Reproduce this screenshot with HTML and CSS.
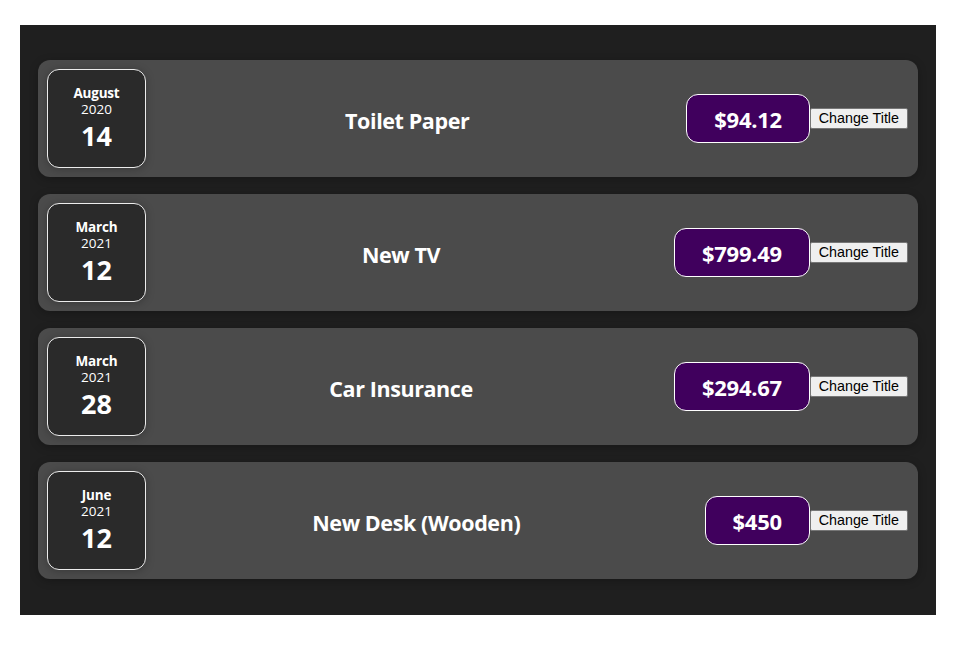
FILE: index.html
```html
<!DOCTYPE html>
<html lang="en">
<head>
<meta charset="utf-8">
<title>Expenses</title>
<link rel="stylesheet" href="styles.css">
</head>
<body>
<div class="expenses">
  <div class="expense-item">
    <div class="expense-date">
      <div class="expense-date__month">August</div>
      <div class="expense-date__year">2020</div>
      <div class="expense-date__day">14</div>
    </div>
    <h2 class="expense-item__title">Toilet Paper</h2>
    <div class="expense-item__price">$94.12</div>
    <button class="expense-item__btn">Change Title</button>
  </div>
  <div class="expense-item">
    <div class="expense-date">
      <div class="expense-date__month">March</div>
      <div class="expense-date__year">2021</div>
      <div class="expense-date__day">12</div>
    </div>
    <h2 class="expense-item__title">New TV</h2>
    <div class="expense-item__price">$799.49</div>
    <button class="expense-item__btn">Change Title</button>
  </div>
  <div class="expense-item">
    <div class="expense-date">
      <div class="expense-date__month">March</div>
      <div class="expense-date__year">2021</div>
      <div class="expense-date__day">28</div>
    </div>
    <h2 class="expense-item__title">Car Insurance</h2>
    <div class="expense-item__price">$294.67</div>
    <button class="expense-item__btn">Change Title</button>
  </div>
  <div class="expense-item">
    <div class="expense-date">
      <div class="expense-date__month">June</div>
      <div class="expense-date__year">2021</div>
      <div class="expense-date__day">12</div>
    </div>
    <h2 class="expense-item__title">New Desk (Wooden)</h2>
    <div class="expense-item__price">$450</div>
    <button class="expense-item__btn">Change Title</button>
  </div>
</div>
</body>
</html>
```
FILE: styles.css
```css
html, body {
  margin: 0;
  padding: 0;
  background: #ffffff;
}

body {
  font-family: "Open Sans", "Noto Sans", sans-serif;
}

.expenses {
  box-sizing: border-box;
  width: 916px;
  margin: 25px 0 0 20px;
  padding: 35px 18px 36px;
  background-color: #1f1f1f;
  display: flex;
  flex-direction: column;
  gap: 17px;
}

.expense-item {
  display: flex;
  align-items: center;
  height: 117px;
  box-sizing: border-box;
  padding: 9px 10px 9px 9px;
  border-radius: 12px;
  background-color: #4b4b4b;
  box-shadow: 0 2px 8px rgba(0, 0, 0, 0.25);
}

.expense-date {
  box-sizing: border-box;
  width: 99px;
  height: 99px;
  flex: none;
  display: flex;
  flex-direction: column;
  align-items: center;
  justify-content: center;
  padding-top: 2px;
  border: 1px solid #ececec;
  border-radius: 12px;
  background-color: #2a2a2a;
  color: #ffffff;
  box-shadow: 0 1px 8px rgba(0, 0, 0, 0.25);
}

.expense-date__month {
  font-size: 13.5px;
  line-height: 16.5px;
  font-weight: bold;
  letter-spacing: -0.2px;
}

.expense-date__year {
  font-size: 13.5px;
  line-height: 17px;
}

.expense-date__day {
  font-size: 27px;
  line-height: 36px;
  font-weight: bold;
}

.expense-item__title {
  flex: 1;
  margin: 0 18px 0 0;
  padding-top: 3px;
  text-align: center;
  color: #ffffff;
  font-size: 21.5px;
  letter-spacing: -0.4px;
  font-weight: bold;
}

.expense-item__price {
  font-size: 22px;
  line-height: 29px;
  letter-spacing: -0.3px;
  font-weight: bold;
  color: #ffffff;
  background-color: #40005d;
  border: 1px solid #ffffff;
  padding: 10px 27px 8px;
  border-radius: 12px;
}

.expense-item__btn {
  font-family: "Liberation Sans", Arial, sans-serif;
  font-size: 14.3px;
  height: 21px;
  padding: 0 8px;
  border: 1px solid #767676;
  border-radius: 2px;
  background-color: #efefef;
  color: #000000;
  line-height: 17px;
}
```
